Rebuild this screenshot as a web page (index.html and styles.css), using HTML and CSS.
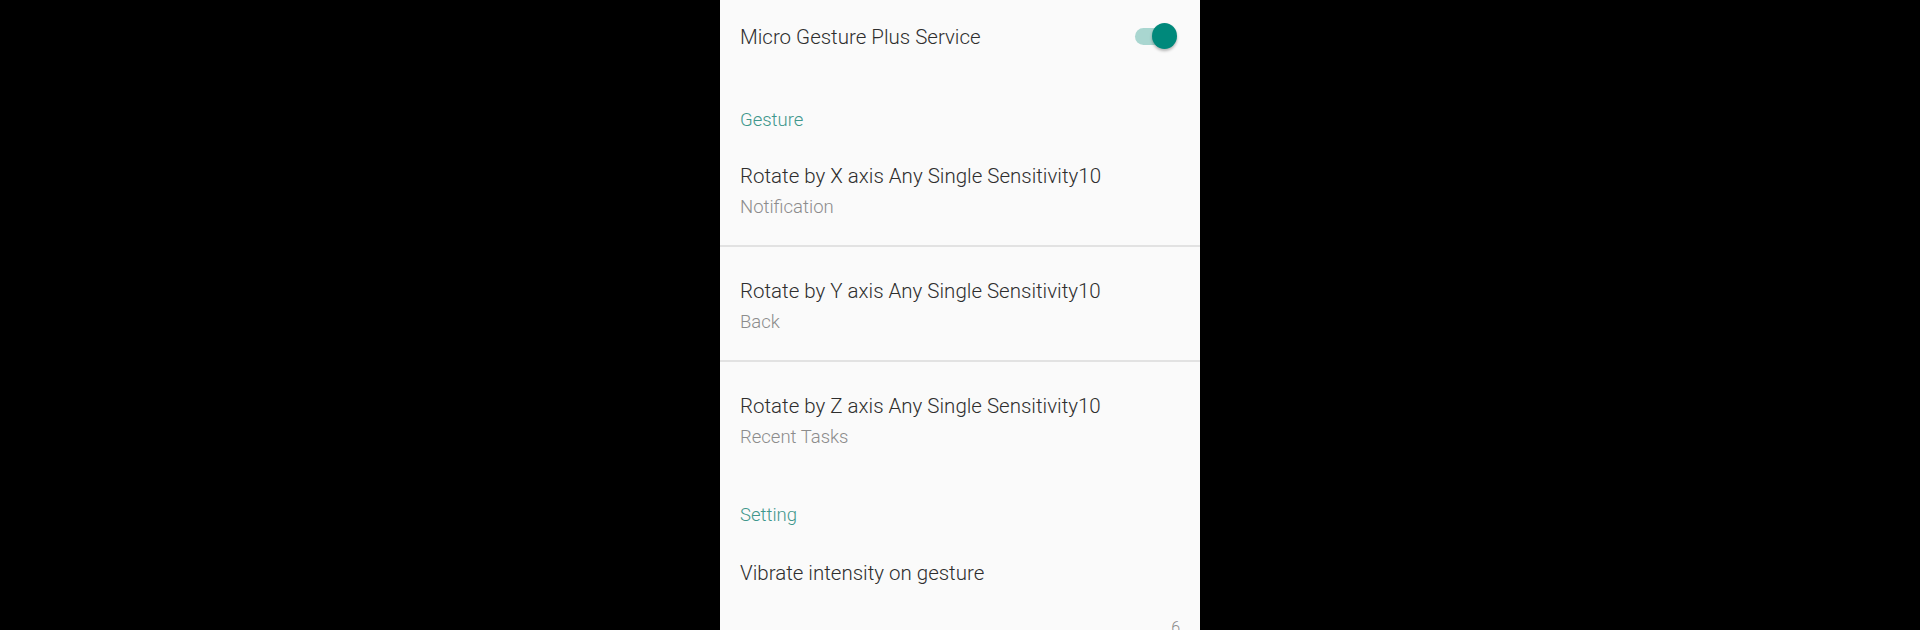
FILE: index.html
```html
<!DOCTYPE html>
<html>
<head>
<meta charset="utf-8">
<title>Micro Gesture Plus</title>
<link rel="stylesheet" href="styles.css">
</head>
<body>
<div class="screen">
  <div class="panel">
    <div class="switch-row">
      <div class="row-title">Micro Gesture Plus Service</div>
      <div class="switch">
        <div class="track"></div>
        <div class="thumb"></div>
      </div>
    </div>

    <div class="category">Gesture</div>
    <div class="item divided">
      <div class="row-title">Rotate by X axis Any Single Sensitivity10</div>
      <div class="summary">Notification</div>
    </div>
    <div class="item divided">
      <div class="row-title">Rotate by Y axis Any Single Sensitivity10</div>
      <div class="summary">Back</div>
    </div>
    <div class="item">
      <div class="row-title">Rotate by Z axis Any Single Sensitivity10</div>
      <div class="summary">Recent Tasks</div>
    </div>

    <div class="category category-next">Setting</div>
    <div class="seek-item">
      <div class="row-title">Vibrate intensity on gesture</div>
      <div class="seek-value">6</div>
    </div>
  </div>
</div>
</body>
</html>
```
FILE: styles.css
```css
html, body {
  margin: 0;
  padding: 0;
  background: #000;
  height: 100%;
  overflow: hidden;
}
.screen {
  display: flex;
  justify-content: center;
  height: 630px;
}
.panel {
  width: 480px;
  height: 630px;
  background: #fafafa;
  font-family: Roboto, "Noto Sans", sans-serif;
  font-weight: 300;
  overflow: hidden;
}
.row-title {
  font-size: 20.5px;
  line-height: 28px;
  color: #2e2e2e;
  white-space: nowrap;
}
.switch-row {
  display: flex;
  align-items: center;
  justify-content: space-between;
  padding: 23px 23px 25px 20px;
}
.switch {
  position: relative;
  width: 42px;
  height: 28px;
}
.track {
  position: absolute;
  left: 0;
  top: 5px;
  width: 36px;
  height: 17px;
  border-radius: 9px;
  background: #a9d6d0;
}
.thumb {
  position: absolute;
  right: 0;
  top: 0;
  width: 25px;
  height: 26px;
  border-radius: 50%;
  background: #00897b;
  box-shadow: 0 2px 3px rgba(0, 0, 0, 0.28);
}
.category {
  padding: 32px 20px 0;
  font-size: 18.5px;
  line-height: 24px;
  color: #3f978c;
}
.category-next {
  padding-top: 29px;
}
.item {
  padding: 30px 20px 23px;
}
.item.divided {
  border-bottom: 2px solid #e2e2e2;
  padding-bottom: 24px;
}
.summary {
  margin-top: 3px;
  font-size: 18.5px;
  line-height: 28px;
  color: #8c8c8c;
}
.seek-item {
  padding: 32px 20px 0;
  display: flex;
  flex-direction: column;
}
.seek-value {
  align-self: flex-end;
  margin-top: 31px;
  font-size: 16px;
  line-height: 20px;
  color: #8c8c8c;
}
```
